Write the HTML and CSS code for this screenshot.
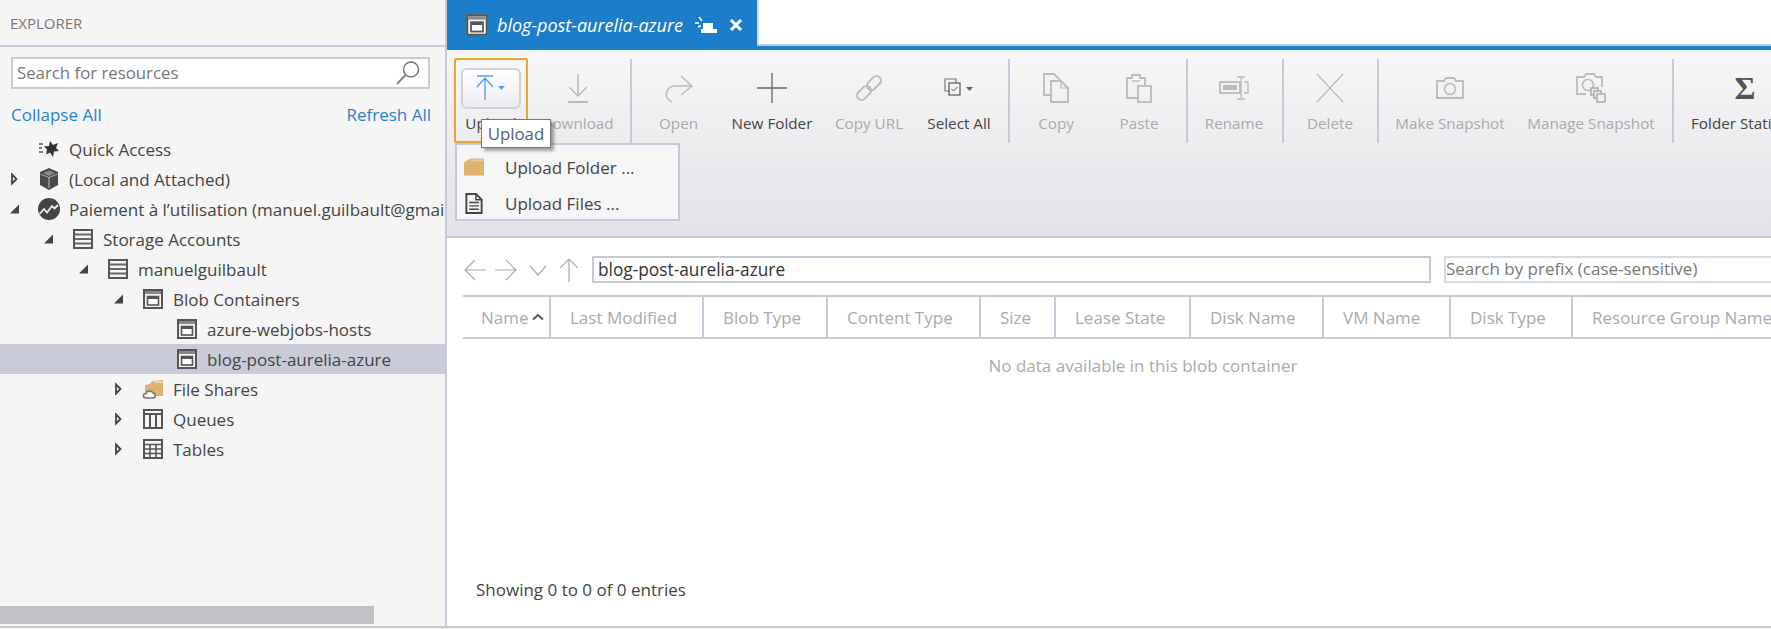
FILE: index.html
```html
<!DOCTYPE html>
<html lang="en">
<head>
<meta charset="utf-8">
<title>Explorer</title>
<link rel="stylesheet" href="styles.css">
</head>
<body>
<svg class="sprite" aria-hidden="true">
  <symbol id="i-container" viewBox="0 0 22 22"><rect x="1" y="1" width="20" height="20" fill="#f5f5f5"/><rect x="2" y="2" width="18" height="18" fill="none" stroke="#555" stroke-width="2"/><path d="M3 3h16v3H3z" fill="#888"/><rect x="5.500" y="8.500" width="11" height="8.500" fill="#fff" stroke="#555" stroke-width="1.600"/><path d="M6 8h10v3H6z" fill="#555"/></symbol>
  <symbol id="i-rows" viewBox="0 0 22 22"><rect x="2" y="2" width="18" height="18" fill="#f5f5f5" stroke="#555" stroke-width="2"/><path d="M3 6.500h16M3 11h16M3 15.500h16" stroke="#666" stroke-width="2" fill="none"/></symbol>
  <symbol id="i-arrow-right" viewBox="0 0 10 14"><path d="M2 2.500 6.500 7 2 11.500z" fill="#f5f5f5" stroke="#444" stroke-width="1.800"/></symbol>
  <symbol id="i-arrow-down" viewBox="0 0 10 14"><path d="M9 2.500v9H0z" fill="#444"/></symbol>
</svg>

<div class="app">
  <aside class="sidebar">
    <div class="explorer-title">EXPLORER</div>
    <div class="search-wrap">
      <div class="search-box">
        <span class="search-text">Search for resources</span>
        <svg class="search-icon" viewBox="0 0 26 26"><circle cx="16" cy="9.500" r="7.500" fill="none" stroke="#777" stroke-width="1.500"/><path d="M10.500 15 2 24" stroke="#888" stroke-width="2" fill="none"/></svg>
      </div>
    </div>
    <div class="actions"><span class="link">Collapse All</span><span class="link">Refresh All</span></div>
    <div class="tree">
      <div class="row d0"><span class="tw"></span>
        <svg class="ti" viewBox="0 0 22 22"><path d="M1 6h4M1 10h3M1 14h4" stroke="#555" stroke-width="1.500" fill="none"/><path d="M12 3l3 4 5-2-2 5 3 3-5 .5-1 5.500-3-4.500-4 2 1-5-3-3 5-.5z" fill="#333"/></svg>
        <span class="tl">Quick Access</span></div>
      <div class="row d0"><span class="tw"><svg class="ar"><use href="#i-arrow-right"/></svg></span>
        <svg class="ti" viewBox="0 0 22 22"><path d="M11 0 20 4v13l-9 5-9-5V4z" fill="#4a4a4a"/><path d="M11 2.500 17 5l-6 3-6-3z" fill="#8a8a8a"/><path d="M11 9v11" stroke="#bbb" stroke-width="1"/><path d="M2.500 6 11 9.500 19.500 6" stroke="#aaa" stroke-width="1" fill="none"/></svg>
        <span class="tl">(Local and Attached)</span></div>
      <div class="row d0"><span class="tw"><svg class="ar"><use href="#i-arrow-down"/></svg></span>
        <svg class="ti" viewBox="0 0 22 22"><circle cx="11" cy="11" r="11" fill="#444"/><path d="M1.500 16 6 11l3 3.500L14 8l2.500 2.500L20 7" stroke="#eee" stroke-width="1.800" fill="none"/></svg>
        <span class="tl">Paiement à l’utilisation (manuel.guilbault@gmail.com)</span></div>
      <div class="row d1"><span class="tw"><svg class="ar"><use href="#i-arrow-down"/></svg></span>
        <svg class="ti"><use href="#i-rows"/></svg><span class="tl">Storage Accounts</span></div>
      <div class="row d2"><span class="tw"><svg class="ar"><use href="#i-arrow-down"/></svg></span>
        <svg class="ti"><use href="#i-rows"/></svg><span class="tl">manuelguilbault</span></div>
      <div class="row d3"><span class="tw"><svg class="ar"><use href="#i-arrow-down"/></svg></span>
        <svg class="ti"><use href="#i-container"/></svg><span class="tl">Blob Containers</span></div>
      <div class="row d4"><span class="tw"></span>
        <svg class="ti"><use href="#i-container"/></svg><span class="tl">azure-webjobs-hosts</span></div>
      <div class="row d4 selected"><span class="tw"></span>
        <svg class="ti"><use href="#i-container"/></svg><span class="tl">blog-post-aurelia-azure</span></div>
      <div class="row d3"><span class="tw"><svg class="ar"><use href="#i-arrow-right"/></svg></span>
        <svg class="ti" viewBox="0 0 22 22"><path d="M3 7 8 6l2-3 11-1v16H3z" fill="#deb26f"/><path d="M12 3h8v2h-8z" fill="#eed7ae"/><path d="M4 20c-3.500 0-3.500-4.500 0-4.500 .5-3 5.500-3.500 7-.5 3 0 3 5 0 5z" fill="#f5f5f5" stroke="#777" stroke-width="1.600"/></svg>
        <span class="tl">File Shares</span></div>
      <div class="row d3"><span class="tw"><svg class="ar"><use href="#i-arrow-right"/></svg></span>
        <svg class="ti" viewBox="0 0 22 22"><rect x="2" y="2" width="18" height="18" fill="#f5f5f5" stroke="#555" stroke-width="2"/><path d="M2 6h18" stroke="#555" stroke-width="2"/><path d="M8 6v14M14 6v14" stroke="#555" stroke-width="2"/></svg>
        <span class="tl">Queues</span></div>
      <div class="row d3"><span class="tw"><svg class="ar"><use href="#i-arrow-right"/></svg></span>
        <svg class="ti" viewBox="0 0 22 22"><rect x="2" y="2" width="18" height="18" fill="#f5f5f5" stroke="#555" stroke-width="2"/><path d="M2 6.500h18M2 11h18M2 15.500h18M8 6v14M14 6v14" stroke="#555" stroke-width="1.600"/></svg>
        <span class="tl">Tables</span></div>
    </div>
    <div class="hscroll"><div class="hthumb"></div></div>
  </aside>

  <main class="main">
    <div class="tabbar">
      <div class="tab">
        <svg class="tab-icon"><use href="#i-container"/></svg>
        <span class="tab-title">blog-post-aurelia-azure</span>
        <svg class="tab-busy" viewBox="0 0 22 16"><path d="M8 6h10v6H8zM6 12h16v4H6z" fill="#fff"/><path d="M0 6h4M4 0l3 4M3 10l3-1.500" stroke="#fff" stroke-width="1.500" fill="none"/></svg>
        <svg class="tab-close" viewBox="0 0 14 14"><path d="M2 2l10 10M12 2 2 12" stroke="#fff" stroke-width="3" fill="none"/></svg>
      </div>
      <div class="tab-rest"></div>
    </div>

    <div class="toolbar">
      <div class="tool w74 upload">
        <div class="tool-icon"><svg width="34" height="30" viewBox="0 0 34 30"><path d="M1 2h16M9 4v22M1 13l8-9 8 9" stroke="#4da3f5" stroke-width="1.400" fill="none"/><path d="M22 12h7l-3.500 4z" fill="#4da3f5"/></svg></div>
        <span class="tool-label">Upload</span>
      </div>
      <div class="tool w99 off">
        <div class="tool-icon"><svg width="30" height="30" viewBox="0 0 30 30"><path d="M15 1v22M6 14l9 9 9-9" stroke="#bbb" stroke-width="1.500" fill="none"/><path d="M5 29h20" stroke="#bbb" stroke-width="2"/></svg></div>
        <span class="tool-label">Download</span>
      </div>
      <div class="sep s3"></div>
      <div class="tool w93 off">
        <div class="tool-icon"><svg width="30" height="30" viewBox="0 0 30 30"><path d="M28 13H11C4 13 0 21 4 26c1 1 2 2 4 3" stroke="#bbb" stroke-width="1.500" fill="none"/><path d="M17 3l11 10-11 9" stroke="#bbb" stroke-width="1.500" fill="none"/></svg></div>
        <span class="tool-label">Open</span>
      </div>
      <div class="tool w94">
        <div class="tool-icon"><svg width="30" height="30" viewBox="0 0 30 30"><path d="M0 15h30M15 0v30" stroke="#666" stroke-width="1.300" fill="none"/></svg></div>
        <span class="tool-label">New Folder</span>
      </div>
      <div class="tool w100 off">
        <div class="tool-icon"><svg width="30" height="30" viewBox="0 0 30 30"><g fill="none" stroke="#bbb" stroke-width="2" transform="rotate(-45 15 15)"><rect x="0" y="10.500" width="16" height="9" rx="4.500"/><rect x="14" y="10.500" width="16" height="9" rx="4.500"/></g></svg></div>
        <span class="tool-label">Copy URL</span>
      </div>
      <div class="tool w80">
        <div class="tool-icon"><svg width="30" height="20" viewBox="0 0 30 20"><path d="M6 13H1V1h11v4" fill="none" stroke="#777" stroke-width="1.200"/><rect x="5" y="5" width="11" height="12" fill="none" stroke="#555" stroke-width="1.200"/><path d="M7.500 11l2 2 4-4" fill="none" stroke="#555" stroke-width="1"/><path d="M22 9h7l-3.500 4z" fill="#666"/></svg></div>
        <span class="tool-label">Select All</span>
      </div>
      <div class="sep s9"></div>
      <div class="tool w92 off">
        <div class="tool-icon"><svg width="28" height="30" viewBox="0 0 28 30"><path d="M9 22H2V1h10l6 6v1" fill="none" stroke="#bbb" stroke-width="1.800"/><path d="M9 8h10l7 7v14H9z" fill="none" stroke="#bbb" stroke-width="1.800"/><path d="M19 8v7h7" fill="none" stroke="#bbb" stroke-width="1.200"/></svg></div>
        <span class="tool-label">Copy</span>
      </div>
      <div class="tool w74 off">
        <div class="tool-icon"><svg width="26" height="30" viewBox="0 0 26 30"><path d="M12 25H1V5h5V2h8v3h5v7" fill="none" stroke="#bbb" stroke-width="1.800"/><rect x="12" y="13" width="13" height="16" fill="none" stroke="#bbb" stroke-width="1.800"/><path d="M6 8h8" stroke="#bbb" stroke-width="1.500"/></svg></div>
        <span class="tool-label">Paste</span>
      </div>
      <div class="sep s10"></div>
      <div class="tool w92 off">
        <div class="tool-icon"><svg width="30" height="24" viewBox="0 0 30 24"><rect x="1" y="6" width="20" height="11" fill="none" stroke="#bbb" stroke-width="1.800"/><rect x="4" y="9" width="14" height="5" fill="#bbb"/><path d="M18 1h8M18 23h8M22 1v22M25 6h4v11h-4" fill="none" stroke="#bbb" stroke-width="1.300"/></svg></div>
        <span class="tool-label">Rename</span>
      </div>
      <div class="sep s2"></div>
      <div class="tool w92 off">
        <div class="tool-icon"><svg width="28" height="30" viewBox="0 0 28 30"><path d="M1 1l26 28M27 1 1 29" stroke="#bbb" stroke-width="1.300" fill="none"/></svg></div>
        <span class="tool-label">Delete</span>
      </div>
      <div class="sep s1"></div>
      <div class="tool w142 off">
        <div class="tool-icon"><svg width="28" height="22" viewBox="0 0 28 22"><path d="M1 4h7l2-3h8l2 3h7v17H1z" fill="none" stroke="#bbb" stroke-width="1.800"/><circle cx="14" cy="12" r="5.500" fill="none" stroke="#bbb" stroke-width="1.600"/></svg></div>
        <span class="tool-label">Make Snapshot</span>
      </div>
      <div class="tool w140 off">
        <div class="tool-icon"><svg width="30" height="30" viewBox="0 0 30 30"><path d="M10 21H1V4h7l2-3h8l2 3h6v10" fill="none" stroke="#bbb" stroke-width="1.800"/><circle cx="12" cy="12" r="5.500" fill="none" stroke="#bbb" stroke-width="1.600"/><rect x="15" y="15" width="7" height="7" fill="#eee" stroke="#aaa" stroke-width="1.500"/><rect x="18" y="18" width="7" height="7" fill="#eee" stroke="#aaa" stroke-width="1.500"/><rect x="21" y="21" width="8" height="8" fill="#f2f2f2" stroke="#aaa" stroke-width="1.500"/></svg></div>
        <span class="tool-label">Manage Snapshot</span>
      </div>
      <div class="sep s11"></div>
      <div class="tool stats">
        <div class="tool-icon sigma">Σ</div>
        <span class="tool-label">Folder Statistics</span>
      </div>

      <div class="tooltip">Upload</div>
      <div class="menu">
        <div class="menu-item">
          <svg class="menu-icon" viewBox="0 0 20 18"><path d="M0 4 6 0h14v17H0z" fill="#deb26f"/><path d="M7 1h12v2H7z" fill="#e9cd9e"/></svg>
          <span>Upload Folder ...</span>
        </div>
        <div class="menu-item">
          <svg class="menu-icon" viewBox="0 0 20 22"><path d="M2 1h10l6 6v14H2z" fill="none" stroke="#444" stroke-width="2"/><path d="M12 1v6h6M5 10h10M5 13.500h10M5 17h10" fill="none" stroke="#444" stroke-width="1.500"/></svg>
          <span>Upload Files ...</span>
        </div>
      </div>
    </div>

    <div class="content">
      <div class="pathbar">
        <div class="nav">
          <svg width="22" height="22" viewBox="0 0 22 22"><path d="M22 11H1M11 1 1 11l10 10" stroke="#aaa" stroke-width="1.200" fill="none"/></svg>
          <svg width="22" height="22" viewBox="0 0 22 22"><path d="M0 11h21M11 1l10 10-10 10" stroke="#aaa" stroke-width="1.200" fill="none"/></svg>
          <svg class="nav-down" width="18" height="22" viewBox="0 0 18 22"><path d="M1 7l8 9 8-9" stroke="#aaa" stroke-width="1.200" fill="none"/></svg>
          <svg class="nav-up" width="18" height="24" viewBox="0 0 18 24"><path d="M9 24V1M0 10l9-9 9 9" stroke="#aaa" stroke-width="1.200" fill="none"/></svg>
        </div>
        <div class="path-input">blog-post-aurelia-azure</div>
        <div class="prefix-input">Search by prefix (case-sensitive)</div>
      </div>
      <div class="thead">
        <div class="th first">Name<svg class="sort" viewBox="0 0 12 8"><path d="M1 6.500 6 2l5 4.500" stroke="#555" stroke-width="2" fill="none"/></svg></div>
        <div class="th">Last Modified</div>
        <div class="th">Blob Type</div>
        <div class="th">Content Type</div>
        <div class="th">Size</div>
        <div class="th">Lease State</div>
        <div class="th">Disk Name</div>
        <div class="th">VM Name</div>
        <div class="th">Disk Type</div>
        <div class="th">Resource Group Name</div>
      </div>
      <div class="empty">No data available in this blob container</div>
      <div class="entries">Showing 0 to 0 of 0 entries</div>
    </div>
  </main>
</div>
<div class="footer"></div>
</body>
</html>
```

FILE: styles.css
```css
* { box-sizing: border-box; }
html, body { margin: 0; padding: 0; height: 100%; overflow: hidden; background: #fff; }
body { font-family: "Open Sans", "Noto Sans", sans-serif; font-size: 17px; color: #444; }
.sprite { display: none; }

.app { display: flex; height: 626px; }
.footer { height: 3px; border-top: 2px solid #c8c9d8; background: #f5f5f5; }

/* Sidebar */
.sidebar { width: 447px; flex: none; background: #f5f5f5; border-right: 2px solid #c8c9d8; display: flex; flex-direction: column; overflow: hidden; }
.explorer-title { height: 47px; padding: 12px 0 0 10px; font-size: 15px; line-height: 22px; color: #777; border-bottom: 2px solid #c8c9d8; }
.search-wrap { padding: 10px 15px 0 11px; }
.search-box { height: 32px; border: 2px solid #c8cad8; background: #fff; display: flex; align-items: center; justify-content: space-between; padding: 0 7px 0 4px; }
.search-text { color: #777; font-size: 16.800px; padding-bottom: 2px; }
.search-icon { width: 26px; height: 26px; }
.actions { display: flex; justify-content: space-between; padding: 15px 14px 0 11px; height: 39px; line-height: 22px; font-size: 17px; }
.link { color: #2a7fd0; }
.tree { margin-top: 6px; flex: 1; }
.row { display: flex; align-items: center; height: 30px; white-space: nowrap; font-size: 17px; color: #444; }
.d0 { padding-left: 10px; }
.d1 { padding-left: 44px; }
.d2 { padding-left: 79px; }
.d3 { padding-left: 114px; }
.d4 { padding-left: 148px; }
.selected { background: #c9cbd9; }
.tw { width: 28px; flex: none; display: flex; align-items: center; }
.ar { width: 10px; height: 14px; }
.ti { width: 22px; height: 22px; flex: none; margin-right: 9px; }
.tl { flex: none; }
.hscroll { height: 20px; padding-bottom: 2px; }
.hthumb { width: 374px; height: 18px; background: #c1c1c6; }

/* Main */
.main { flex: 1; min-width: 0; display: flex; flex-direction: column; overflow: hidden; background: #fff; }
.tabbar { display: flex; height: 50px; flex: none; }
.tab { width: 310px; height: 50px; background: #1b7ecb; display: flex; align-items: center; padding-left: 18px; color: #fff; flex: none; }
.tab-icon { width: 24px; height: 24px; margin-right: 8px; flex: none; }
.tab-title { font-style: italic; font-size: 18px; width: 184px; white-space: nowrap; flex: none; }
.tab-busy { width: 22px; height: 16px; margin-left: 14px; flex: none; }
.tab-close { width: 14px; height: 14px; margin-left: 12px; flex: none; }
.tab-rest { flex: 1; height: 50px; border-bottom: 4px solid #1b7ecb; background: #fff; box-shadow: inset 0 -2px 0 #c8c9d8, inset 2px 0 0 #d8d9e2; }

.toolbar { position: relative; height: 188px; flex: none; display: flex; align-items: flex-start; padding: 8px 0 0 7px; background: linear-gradient(#f7f7f7, #e2e2e8); border-bottom: 2px solid #c8c9d8; }
.tool { height: 85px; border: 2px solid transparent; padding-top: 13px; display: flex; flex-direction: column; align-items: center; flex: none; white-space: nowrap; font-size: 15.250px; color: #444; }
.off { color: #aaa; }
.tool-icon { height: 30px; margin-bottom: 10px; display: flex; align-items: center; justify-content: center; flex: none; }
.tool-label { line-height: 20px; }
.upload { border-color: #e8a735; border-radius: 2px; }
.upload .tool-icon { width: 60px; height: 41px; margin-top: -5px; margin-bottom: 4px; border: 2px solid #d0d0dc; border-radius: 6px; background: linear-gradient(#fff, #ececf0); padding-left: 4px; }
.w74 { width: 74px; }
.w80 { width: 80px; }
.w92 { width: 92px; }
.w93 { width: 93px; }
.w94 { width: 94px; }
.w99 { width: 99px; }
.w100 { width: 100px; }
.w140 { width: 140px; }
.w142 { width: 142px; }
.stats { width: 120px; align-items: flex-start; padding-left: 15px; }
.sigma { font-family: "Liberation Serif", serif; font-weight: bold; font-size: 32px; color: #555; width: 108px; }
.sep { width: 2px; height: 84px; margin-top: 1px; background: #c8c9d8; flex: none; }
.s1 { margin-left: 1px; }
.s2 { margin-left: 2px; }
.s3 { margin-left: 3px; }
.s9 { margin-left: 9px; }
.s10 { margin-left: 10px; }
.s11 { margin-left: 11px; }

.tooltip { position: absolute; left: 34px; top: 69px; width: 70px; height: 29px; background: #fff; border: 1px solid #777; box-shadow: 3px 3px 3px rgba(0,0,0,.35); font-size: 16.800px; line-height: 27px; text-align: center; color: #50607e; z-index: 3; }
.menu { position: absolute; left: 8px; top: 93px; width: 225px; height: 78px; border: 2px solid #c8c9d8; background: #f6f6f6; padding-top: 4px; z-index: 2; }
.menu-item { display: flex; align-items: center; height: 36px; font-size: 17px; color: #444; padding-left: 7px; }
.menu-icon { width: 20px; height: 21px; margin-right: 21px; flex: none; }

/* Content */
.content { flex: 1; display: flex; flex-direction: column; background: #fff; min-height: 0; }
.pathbar { display: flex; height: 57px; flex: none; padding: 18px 0 0 17px; }
.nav { width: 128px; height: 27px; display: flex; align-items: center; gap: 9px; flex: none; }
.nav-down { margin-left: 3px; }
.nav-up { margin-left: 4px; }
.path-input { width: 839px; height: 27px; border: 2px solid #c8c9d8; padding-left: 4px; font-size: 17.300px; line-height: 23px; color: #333; flex: none; white-space: nowrap; }
.prefix-input { width: 400px; height: 27px; margin-left: 13px; border: 2px solid #d8d9e4; padding-left: 0; font-size: 17px; line-height: 21px; color: #777; flex: none; white-space: nowrap; }
.thead { display: grid; grid-template-columns: 88px 153px 124px 153px 75px 135px 133px 127px 122px 240px; margin-left: 16px; height: 44px; flex: none; border-top: 2px solid #c8c9d8; border-bottom: 2px solid #c8c9d8; width: 1350px; }
.th { display: flex; align-items: center; padding-left: 19px; font-size: 17px; color: #aaa; border-right: 2px solid #c8c9d8; white-space: nowrap; }
.th.first { padding-left: 18px; }
.th:last-child { border-right: 0; }
.sort { width: 12px; height: 8px; margin-left: 3px; flex: none; }
.empty { height: 54px; padding: 15px 0 0 68px; line-height: 24px; text-align: center; font-size: 17px; color: #aaa; }
.entries { margin-top: 185px; padding-left: 29px; font-size: 17px; line-height: 24px; color: #444; }
```
